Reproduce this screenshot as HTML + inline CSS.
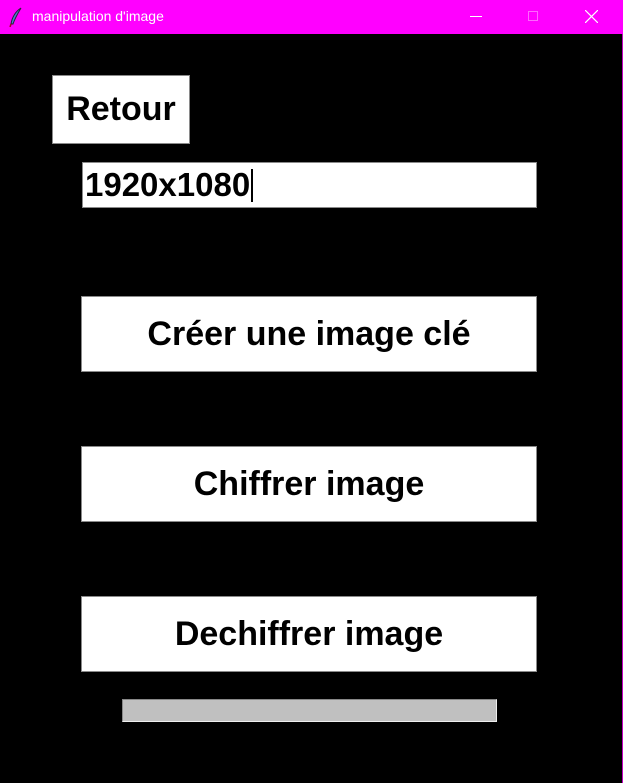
<!DOCTYPE html>
<html><head><meta charset="utf-8"><style>
*{margin:0;padding:0;box-sizing:border-box}
body{width:623px;height:783px;background:#000;position:relative;overflow:hidden;font-family:"Liberation Sans",Arial,sans-serif}
.tb{position:absolute;left:0;top:0;width:623px;height:34px;background:#ff00ff;color:#fff;font-size:14px}
.rb{position:absolute;right:0;top:34px;width:1px;height:749px;background:#c000c0}
.b{position:absolute;background:#fff;border:1px solid #8a8a8a;font-weight:bold;font-size:34px;color:#000;display:flex;align-items:center;justify-content:center}
</style></head><body>
<div class="tb">
<svg style="position:absolute;left:9px;top:7px" width="14" height="20" viewBox="0 0 14 20"><path d="M12 1 C7 4 3 10 2 17 L4 17 C6 11 9 6 12 1Z" fill="#4a7fd0" stroke="#223" stroke-width="1"/><path d="M2 17 L1 20" stroke="#a02" stroke-width="1.5"/></svg>
<span style="position:absolute;left:32px;top:8px">manipulation d'image</span>
<div style="position:absolute;left:470px;top:16px;width:12px;height:1px;background:#fff"></div>
<div style="position:absolute;left:528px;top:11px;width:10px;height:10px;border:1px solid #ff66ff"></div>
<svg style="position:absolute;left:585px;top:10px" width="13" height="13"><path d="M0 0L13 13M13 0L0 13" stroke="#fff" stroke-width="1.2"/></svg>
</div>
<div class="rb"></div>
<div class="b" style="left:52px;top:75px;width:138px;height:69px">Retour</div>
<div class="b" style="left:82px;top:162px;width:455px;height:46px;justify-content:flex-start;padding-left:2px;font-size:33px">1920x1080<span style="display:inline-block;width:2px;height:33px;background:#000;margin-left:1px"></span></div>
<div class="b" style="left:81px;top:296px;width:456px;height:76px">Créer une image clé</div>
<div class="b" style="left:81px;top:446px;width:456px;height:76px">Chiffrer image</div>
<div class="b" style="left:81px;top:596px;width:456px;height:76px">Dechiffrer image</div>
<div style="position:absolute;left:122px;top:699px;width:375px;height:23px;background:#c0c0c0;border:1px solid #888;border-right-color:#eee;border-bottom-color:#eee"></div>
</body></html>
